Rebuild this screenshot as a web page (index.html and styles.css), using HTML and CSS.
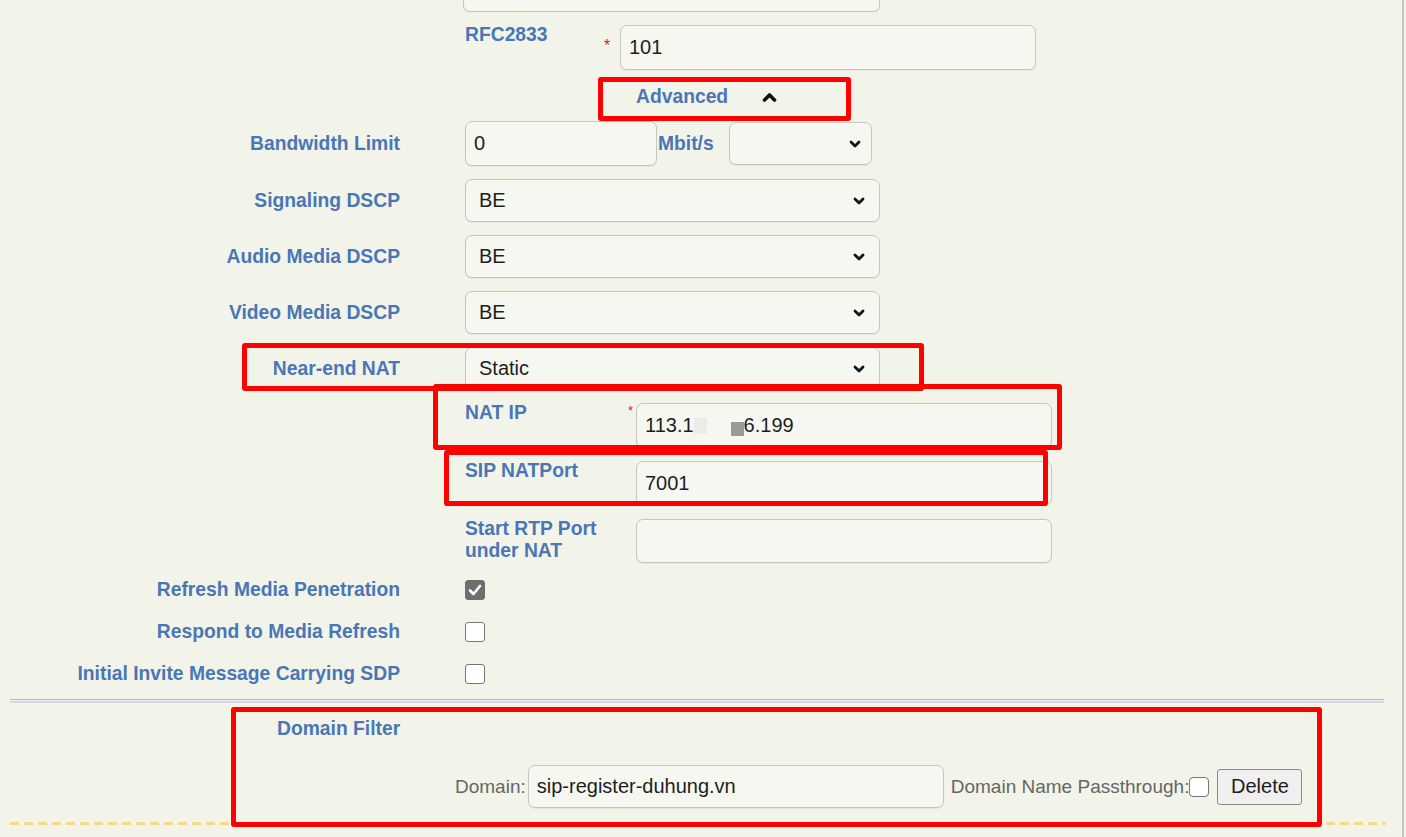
FILE: index.html
```html
<!DOCTYPE html>
<html lang="en">
  <head>
    <meta charset="UTF-8" />
    <meta name="viewport" content="width=device-width, initial-scale=1.0" />
    <title>SIP Trunk - Advanced</title>
    <link rel="stylesheet" href="styles.css">
  </head>
  <body>
    <div class="frame">
      <div class="stub"><div class="field stub_field"></div></div>

      <div class="sub sub_first">
        <div class="sub_lbl lbl_rfc">RFC2833</div>
        <div class="star">*</div>
        <div class="field w416">101</div>
      </div>

      <div class="adv">
        <span>Advanced</span>
        <svg class="caret" width="15" height="10" viewBox="0 0 15 10"><path d="M2.5 8 L7.5 3 L12.5 8" fill="none" stroke="#111" stroke-width="3.6" stroke-linecap="round" stroke-linejoin="round"/></svg>
      </div>

      <div class="row row_bw">
        <div class="lbl">Bandwidth Limit</div>
        <div class="field w192">0</div>
        <div class="unit">Mbit/s</div>
        <div class="select w143">
          <span></span>
          <svg width="12" height="8" viewBox="0 0 12 8"><path d="M2 2 L6 6 L10 2" fill="none" stroke="#111" stroke-width="2.8" stroke-linecap="round" stroke-linejoin="round"/></svg>
        </div>
      </div>

      <div class="row row_sel">
        <div class="lbl">Signaling DSCP</div>
        <div class="select w415">
          <span>BE</span>
          <svg width="12" height="8" viewBox="0 0 12 8"><path d="M2 2 L6 6 L10 2" fill="none" stroke="#111" stroke-width="2.8" stroke-linecap="round" stroke-linejoin="round"/></svg>
        </div>
      </div>

      <div class="row row_sel">
        <div class="lbl">Audio Media DSCP</div>
        <div class="select w415">
          <span>BE</span>
          <svg width="12" height="8" viewBox="0 0 12 8"><path d="M2 2 L6 6 L10 2" fill="none" stroke="#111" stroke-width="2.8" stroke-linecap="round" stroke-linejoin="round"/></svg>
        </div>
      </div>

      <div class="row row_sel">
        <div class="lbl">Video Media DSCP</div>
        <div class="select w415">
          <span>BE</span>
          <svg width="12" height="8" viewBox="0 0 12 8"><path d="M2 2 L6 6 L10 2" fill="none" stroke="#111" stroke-width="2.8" stroke-linecap="round" stroke-linejoin="round"/></svg>
        </div>
      </div>

      <div class="row row_sel">
        <div class="lbl">Near-end NAT</div>
        <div class="select w415">
          <span>Static</span>
          <svg width="12" height="8" viewBox="0 0 12 8"><path d="M2 2 L6 6 L10 2" fill="none" stroke="#111" stroke-width="2.8" stroke-linecap="round" stroke-linejoin="round"/></svg>
        </div>
      </div>

      <div class="sub sub_nat">
        <div class="sub_lbl lbl_natip">NAT IP</div>
        <div class="star star_small">*</div>
        <div class="field w416 field_ip">113.1<span class="blur_light"></span><span class="blur_dark"></span>6.199</div>
      </div>

      <div class="sub sub_port">
        <div class="sub_lbl lbl_nat">SIP NATPort</div>
        <div class="field w416 h44">7001</div>
      </div>

      <div class="sub sub_rtp">
        <div class="sub_lbl lbl_nat">Start RTP Port<br>under NAT</div>
        <div class="field w416 h44"></div>
      </div>

      <div class="row row_chk row_chk_first">
        <div class="lbl">Refresh Media Penetration</div>
        <div class="check checked">
          <svg width="14" height="12" viewBox="0 0 14 12"><path d="M2 6.5 L5.5 10 L12 2" fill="none" stroke="#fff" stroke-width="2.6" stroke-linecap="round" stroke-linejoin="round"/></svg>
        </div>
      </div>
      <div class="row row_chk">
        <div class="lbl">Respond to Media Refresh</div>
        <div class="check"></div>
      </div>
      <div class="row row_chk">
        <div class="lbl">Initial Invite Message Carrying SDP</div>
        <div class="check"></div>
      </div>

      <div class="sep"></div>

      <div class="domain">
        <div class="domain_title">Domain Filter</div>
        <div class="domain_row">
          <span class="plain">Domain:</span>
          <div class="field w416 h43">sip-register-duhung.vn</div>
          <span class="plain pass">Domain Name Passthrough:</span>
          <div class="check check_small"></div>
          <button class="btn">Delete</button>
        </div>
      </div>

      <div class="dash"></div>

      <div class="mark mark_adv"></div>
      <div class="mark mark_near"></div>
      <div class="mark mark_ip"></div>
      <div class="mark mark_port"></div>
      <div class="mark mark_domain"></div>
    </div>
  </body>
</html>
```

FILE: styles.css
```css
body {
  margin: 0;
  background-color: #f2f4ea;
  font-family: "Liberation Sans", Arial, sans-serif;
}
.frame {
  position: relative;
  width: 1402px;
  height: 837px;
  border-right: 2px solid #c4c4c4;
  overflow: hidden;
}

.lbl,
.sub_lbl,
.unit,
.adv,
.domain_title {
  color: #4a76b6;
  font-weight: bold;
  font-size: 19.3px;
}

.field,
.select {
  box-sizing: border-box;
  height: 45px;
  background-color: #f6f7f1;
  border: 1px solid #c6c6c0;
  border-radius: 7px;
  box-shadow: 0 1px 1px rgba(0, 0, 0, 0.06);
  font-size: 20px;
  color: #1e1e1e;
  display: flex;
  align-items: center;
  padding-left: 8px;
}
.select {
  height: 43px;
  justify-content: space-between;
  padding: 0 14px 0 13px;
}
.w416 { width: 416px; }
.w415 { width: 415px; }
.w192 { width: 192px; }
.w143 { width: 143px; padding-right: 10px; }
.h44 { height: 44px; }
.h43 { height: 43px; }

.stub {
  height: 12px;
  overflow: hidden;
  display: flex;
  align-items: flex-end;
  padding-left: 463px;
}
.stub_field {
  width: 417px;
  flex-shrink: 0;
}

/* sub rows, indented under the main column */
.sub {
  display: flex;
  align-items: flex-start;
  padding-left: 465px;
  margin-top: 13px;
}
.sub_lbl {
  line-height: 22px;
  margin-top: -1px;
}
.lbl_rfc { width: 139px; }
.lbl_natip { width: 163px; }
.lbl_nat { width: 171px; }
.star {
  width: 16px;
  color: #e02020;
  font-size: 16px;
  padding-top: 12px;
}
.star_small {
  width: 8px;
  font-size: 13px;
  padding-top: 0;
}
.sub_rtp { margin-top: 14px; }
.blur_light {
  display: inline-block;
  width: 13px;
  height: 16px;
  background-color: #ebebe8;
  margin-right: 24px;
}
.blur_dark {
  display: inline-block;
  width: 13px;
  height: 14px;
  margin-top: 6px;
  background-color: #9a9a9a;
}

.adv {
  height: 51px;
  box-sizing: border-box;
  padding: 3px 0 0 636px;
  display: flex;
  align-items: center;
  gap: 34px;
}

.row {
  display: flex;
  align-items: center;
}
.lbl {
  width: 400px;
  text-align: right;
  margin-right: 65px;
  flex-shrink: 0;
}
.row_bw { height: 45px; }
.unit {
  margin-left: 1px;
  width: 71px;
}
.row_sel {
  height: 43px;
  margin-top: 13px;
}
.row_chk { height: 42px; }
.row_chk_first { margin-top: 6px; }

.check {
  box-sizing: border-box;
  width: 20px;
  height: 20px;
  border: 1.5px solid #767676;
  border-radius: 3px;
  background-color: #fff;
  display: flex;
  align-items: center;
  justify-content: center;
}
.checked {
  background-color: #6e6e6e;
  border-color: #6e6e6e;
}

.sep {
  margin: 4px 18px 0 10px;
  border-top: 1px solid #b4b4d8;
  border-bottom: 2px solid #d6d6ee;
  height: 1px;
}

.domain_title {
  padding: 15px 0 0 277px;
  line-height: 22px;
}
.domain_row {
  display: flex;
  align-items: center;
  margin-top: 25px;
  padding-left: 455px;
}
.plain {
  font-size: 19px;
  color: #666;
  margin-right: 2px;
}
.pass {
  margin-left: 7px;
  margin-right: 0;
}
.check_small {
  border-radius: 4px;
}
.btn {
  margin-left: 8px;
  width: 85px;
  height: 36px;
  font-family: "Liberation Sans", Arial, sans-serif;
  font-size: 20px;
  color: #1e1e1e;
  background-color: #efefef;
  border: 1px solid #8a8a8a;
  border-radius: 3px;
}

.dash {
  margin: 14px 16px 0 10px;
  height: 3px;
  background: repeating-linear-gradient(90deg, #f5d88a 0 9px, transparent 9px 14px);
}

/* red annotation frames drawn over the form */
.mark {
  position: absolute;
  box-sizing: border-box;
  border: 5px solid #ff0000;
  border-radius: 3px;
}
.mark_adv { left: 598px; top: 77px; width: 253px; height: 44px; }
.mark_near { left: 242px; top: 343px; width: 682px; height: 48px; }
.mark_ip { left: 433px; top: 384px; width: 629px; height: 66px; }
.mark_port { left: 444px; top: 450px; width: 604px; height: 56px; }
.mark_domain { left: 231px; top: 707px; width: 1091px; height: 120px; }
```
